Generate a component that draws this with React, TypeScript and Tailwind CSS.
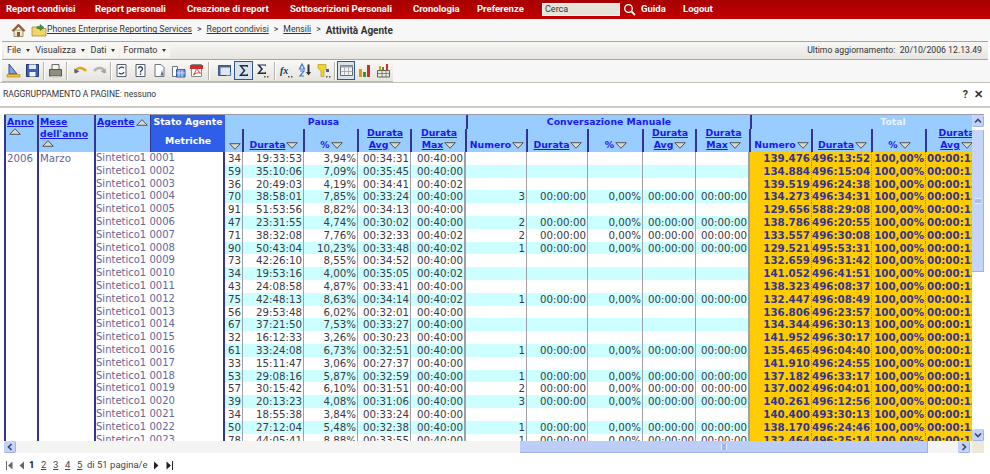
import React from "react";

type Row = [string, string, string, string, string, string, string, string];
const rows: Row[] = [
  ["34", "19:33:53", "3,94%", "00:34:31", "00:40:00", "", "139.476", "496:13:52"],
  ["59", "35:10:06", "7,09%", "00:35:45", "00:40:00", "", "134.884", "496:15:04"],
  ["36", "20:49:03", "4,19%", "00:34:41", "00:40:02", "", "139.519", "496:24:38"],
  ["70", "38:58:01", "7,85%", "00:33:24", "00:40:00", "3", "134.273", "496:34:31"],
  ["91", "51:53:56", "8,82%", "00:34:13", "00:40:00", "", "129.656", "588:29:08"],
  ["47", "23:31:55", "4,74%", "00:30:02", "00:40:00", "2", "138.786", "496:20:55"],
  ["71", "38:32:08", "7,76%", "00:32:33", "00:40:02", "2", "133.557", "496:30:08"],
  ["90", "50:43:04", "10,23%", "00:33:48", "00:40:02", "1", "129.521", "495:53:31"],
  ["73", "42:26:10", "8,55%", "00:34:52", "00:40:00", "", "132.659", "496:31:42"],
  ["34", "19:53:16", "4,00%", "00:35:05", "00:40:02", "", "141.052", "496:41:51"],
  ["43", "24:08:58", "4,87%", "00:33:41", "00:40:00", "", "138.323", "496:08:37"],
  ["75", "42:48:13", "8,63%", "00:34:14", "00:40:02", "1", "132.447", "496:08:49"],
  ["56", "29:53:48", "6,02%", "00:32:01", "00:40:00", "", "136.806", "496:23:57"],
  ["67", "37:21:50", "7,53%", "00:33:27", "00:40:00", "", "134.344", "496:30:13"],
  ["32", "16:12:33", "3,26%", "00:30:23", "00:40:00", "", "141.952", "496:30:17"],
  ["61", "33:24:08", "6,73%", "00:32:51", "00:40:00", "1", "135.465", "496:04:40"],
  ["33", "15:11:47", "3,06%", "00:27:37", "00:40:00", "", "141.910", "496:24:55"],
  ["53", "29:08:16", "5,87%", "00:32:59", "00:40:00", "1", "137.182", "496:33:17"],
  ["57", "30:15:42", "6,10%", "00:31:51", "00:40:00", "2", "137.002", "496:04:01"],
  ["39", "20:13:23", "4,08%", "00:31:06", "00:40:00", "3", "140.261", "496:12:56"],
  ["34", "18:55:38", "3,84%", "00:33:24", "00:40:00", "", "140.400", "493:30:13"],
  ["50", "27:12:04", "5,48%", "00:32:38", "00:40:00", "1", "138.170", "496:24:46"],
  ["78", "44:05:41", "8,88%", "00:33:55", "00:40:00", "1", "132.464", "496:25:14"],
];

const gridCols =
  "grid grid-cols-[33px_57px_56px_75px_18px_61px_54px_53px_55px_61px_61px_55px_53px_54px_62px_60px_54px_60px_48px]";
const rowCols =
  "grid grid-cols-[18px_61px_54px_53px_55px_61px_61px_55px_53px_54px_62px_60px_54px_60px_48px]";

function Tri({ up }: { up?: boolean }) {
  return (
    <svg width="12" height="7" viewBox="0 0 12 7" className="shrink-0">
      <polygon
        points={up ? "6,0.7 11.3,6.3 0.7,6.3" : "0.7,0.7 11.3,0.7 6,6.3"}
        fill="#d8d8d0"
        stroke="#55554f"
        strokeWidth="1"
      />
    </svg>
  );
}

function Head({ l1, l2, plain }: { l1?: string; l2: string; plain?: boolean }) {
  return (
    <div className="h-[23px] bg-[#99ccff] border-l-2 border-[#333399] flex flex-col items-center justify-end overflow-hidden text-[9.3px] leading-[12px] font-bold text-[#1a1aee] -ml-px">
      {l1 && <span className="underline">{l1}</span>}
      <span className="flex items-center gap-[1px] mb-[1px]">
        <span className={plain ? "" : "underline"}>{l2}</span>
        <Tri />
      </span>
    </div>
  );
}

function BarArrow() {
  return <span className="ml-[5px] w-0 h-0 border-l-[2.5px] border-r-[2.5px] border-t-[3px] border-l-transparent border-r-transparent border-t-[#333]" />;
}

function MenuBtn({ t, cls }: { t: string; cls: string }) {
  return (
    <div className={`h-[15px] flex items-center justify-center bg-[#f6f5f1] ${cls}`}>
      {t}
      <BarArrow />
    </div>
  );
}

function Sep({ cls = "mx-[1px]" }: { cls?: string }) {
  return <div className={`w-[1px] h-[18px] bg-[#b5b3aa] border-r border-white box-content ${cls}`} />;
}

function Ico({ children, active }: { children: React.ReactNode; active?: boolean }) {
  return (
    <div className={`w-[19px] h-[19px] flex items-center justify-center ${active ? "border border-[#33558a] bg-[#d9e3ee]" : ""}`}>
      <svg width="15" height="15" viewBox="0 0 15 15">{children}</svg>
    </div>
  );
}

function Toolbar() {
  return (
    <div className="flex items-center pl-[2px] w-[391px] h-[22px] ml-[2px] bg-linear-to-b from-[#f9f8f6] to-[#e6e4df] border-b border-[#b9b7ae]">
      <Ico>
        <path d="M3 1l8 10H3z" fill="#7da3d8" stroke="#2c4f92" />
        <path d="M1 11.5h13v2.5H1z" fill="#f2c32e" stroke="#a67c10" strokeWidth=".6" />
      </Ico>
      <Ico>
        <path d="M1.5 1.5h12v12h-12z" fill="#3f5fb0" stroke="#22366f" />
        <path d="M4 1.5h7v4.5H4z" fill="#dfe8f6" />
        <path d="M4.5 9h6v4.5h-6z" fill="#eef2fa" />
      </Ico>
      <Sep cls="ml-[2px] mr-[1px]" />
      <Ico>
        <path d="M4 1.5h7v5H4z" fill="#f4f4f0" stroke="#6b6b60" />
        <path d="M1.5 6.5h12v6.5h-12z" fill="#8e8f80" stroke="#55564a" />
        <path d="M3 13h9v1.5H3z" fill="#c8c8b8" />
      </Ico>
      <Sep cls="ml-[1px] mr-[3px]" />
      <Ico>
        <path d="M2 10C3 4.5 9 3 13 8" fill="none" stroke="#e2a51c" strokeWidth="2.6" />
        <path d="M1 5.5l1 5 4.5-2z" fill="#49649e" />
      </Ico>
      <Ico>
        <path d="M13 10C12 4.5 6 3 2 8" fill="none" stroke="#b6b6b0" strokeWidth="2.6" />
        <path d="M14 5.5l-1 5-4.5-2z" fill="#a5a5a0" />
      </Ico>
      <Sep cls="ml-[1px] mr-[1px]" />
      <Ico>
        <path d="M3 1.5h9v12H3z" fill="#fff" stroke="#55606e" />
        <path d="M5 6a3 3 0 0 1 5-1M10 9a3 3 0 0 1-5 1" fill="none" stroke="#2b3d72" strokeWidth="1.2" />
      </Ico>
      <Ico>
        <path d="M3 1.5h9v12H3z" fill="#fff" stroke="#55606e" />
        <path d="M5.5 5.5a2 2 0 1 1 3 2c-1 .6-1 1-1 2M7.5 10.5v1.5" fill="none" stroke="#2b3d72" strokeWidth="1.4" />
      </Ico>
      <Ico>
        <path d="M3 1.5h6l3 3v9H3z" fill="#fff" stroke="#6c7480" />
        <path d="M10 7l-1.5 5.5h3z" fill="#54698f" />
      </Ico>
      <Ico>
        <path d="M1.5 3.5h5v10h-5z" fill="#fff" stroke="#6c7480" />
        <path d="M5.5 6.5h8.5v7.5H5.5z" fill="#6e9adf" stroke="#36589a" />
        <path d="M8 6.5V14M11 6.5V14M5.5 10h8.5" stroke="#e8f0fb" strokeWidth=".7" />
      </Ico>
      <Ico>
        <path d="M2.5 1.5h10v12h-10z" fill="#fff" stroke="#888" />
        <path d="M1 2h13v4H1z" fill="#d22b2b" />
        <path d="M4.5 12c2-3 3-6 3-8 1 3 2 5 4 6-3-.5-5 0-7 2z" fill="none" stroke="#c93030" strokeWidth=".9" />
      </Ico>
      <Sep cls="ml-[2px] mr-[5px]" />
      <Ico>
        <path d="M1.5 2.5h12v10h-12z" fill="#dfe6ef" stroke="#2e4a7c" />
        <path d="M1.5 2.5h12v2h-12zM1.5 2.5h2v10h-2z" fill="#4a6796" />
        <path d="M9 12.5h4.5V9" fill="none" stroke="#3d8bd6" strokeWidth="1.2" />
      </Ico>
      <Ico active>
        <path d="M3 2h9v2.5L11 3.5H6l3.5 4-3.5 4h5l1-1V13H3l4.5-5.5z" fill="#1c2c4e" />
      </Ico>
      <Ico>
        <path d="M2 1.5h9v2L10 2.5H5l3 3.5-3 3.5h5l1-1v2.5H2l4-5z" fill="#1c2c4e" />
        <path d="M9 13h1.5v1.5H9zM12 13h1.5v1.5H12z" fill="#555" />
      </Ico>
      <Sep cls="ml-[2px] mr-[1px]" />
      <Ico>
        <text x="2" y="11" fontFamily="Liberation Serif" fontStyle="italic" fontWeight="700" fontSize="10" fill="#22304f">fx</text>
        <path d="M10 13h1.5v1.5H10zM13 13h1.5v1.5H13z" fill="#555" />
      </Ico>
      <Ico>
        <path d="M5 1L2.5 6h5zM3 8h4l-4 5h4" fill="none" stroke="#3c78c8" strokeWidth="1.2" />
        <path d="M11.5 1.5v9" stroke="#333" strokeWidth="2" />
        <path d="M9 9h5l-2.5 3.5z" fill="#333" />
      </Ico>
      <Ico>
        <path d="M2 1.5h8v4l-2 2v6H5v-6l-3-2z" fill="#f4d620" stroke="#a98f10" strokeWidth=".6" />
        <path d="M10 6h3v3h-3z" fill="#44608e" />
        <path d="M10 13h1.5v1.5H10zM13 13h1.5v1.5H13z" fill="#555" />
      </Ico>
      <Sep cls="ml-[1px] mr-[1px]" />
      <Ico active>
        <path d="M1.5 2.5h12v10h-12z" fill="#f2f2ec" stroke="#646a72" />
        <path d="M1.5 2.5h12v2h-12z" fill="#9aa0a8" />
        <path d="M5.5 4.5v8M9.5 4.5v8M1.5 8.5h12" stroke="#9aa0a8" strokeWidth=".8" />
      </Ico>
      <Ico>
        <path d="M2 6h3v8H2z" fill="#d99a12" />
        <path d="M6 9h3v5H6z" fill="#2f9a38" />
        <path d="M10 2h3v12h-3z" fill="#cf2d2d" />
      </Ico>
      <Ico>
        <path d="M3 3h2v4H3z" fill="#d99a12" />
        <path d="M6 4h2v3H6z" fill="#2f9a38" />
        <path d="M10 1h2v6h-2z" fill="#cf2d2d" />
        <path d="M1.5 7.5h12v6.5h-12z" fill="#e9e9df" stroke="#63635a" />
        <path d="M1.5 10.5h12M6 7.5V14M10 7.5V14" stroke="#63635a" strokeWidth=".7" />
      </Ico>
    </div>
  );
}

function ScrollBtn({ children }: { children: React.ReactNode }) {
  return (
    <div className="w-[12px] h-[12px] shrink-0 flex items-center justify-center bg-[#c3d3fb] rounded-[2px] border-r border-b border-[#9db3e8]">
      {children}
    </div>
  );
}

function Chev({ d }: { d: string }) {
  return (
    <svg width="8" height="8" viewBox="0 0 8 8">
      <path d={d} fill="none" stroke="#3d4a66" strokeWidth="1.7" />
    </svg>
  );
}

function Cell({ v, cls }: { v: string; cls: string }) {
  return <div className={`text-right pr-[1px] overflow-hidden whitespace-nowrap ${cls}`}>{v}</div>;
}

export default function App() {
  const sans = "font-['DejaVu_Sans',sans-serif]";
  const ui = "font-['Roboto',sans-serif]";
  return (
    <div className={`w-[990px] h-[474px] overflow-hidden bg-white flex flex-col ${sans}`}>
      {/* top nav */}
      <div className={`h-[19px] shrink-0 bg-linear-to-b from-[#a80000] to-[#c20000] flex items-center pl-[6px] text-white text-[9.5px] font-bold whitespace-nowrap ${ui}`}>
        <span className="w-[89px]">Report condivisi</span>
        <span className="w-[92px]">Report personali</span>
        <span className="w-[103px]">Creazione di report</span>
        <span className="w-[123px]">Sottoscrizioni Personali</span>
        <span className="w-[64px]">Cronologia</span>
        <span className="w-[65px]">Preferenze</span>
        <div className="w-[78px] h-[13px] bg-[#e6e4d8] border border-[#f4f3ec] text-[#333] text-[9px] font-normal leading-[11px] pl-[2px]">Cerca</div>
        <svg width="13" height="13" viewBox="0 0 13 13" className="ml-[3px] mr-[5px]">
          <circle cx="5.5" cy="5.5" r="3.8" fill="none" stroke="#fff" strokeWidth="1.3" />
          <path d="M8.5 8.5l3.5 3.5" stroke="#fff" strokeWidth="1.8" />
        </svg>
        <span className="w-[42px]">Guida</span>
        <span>Logout</span>
      </div>

      {/* breadcrumb */}
      <div className={`h-[22px] shrink-0 bg-[#f7f7f7] flex items-center text-[8.7px] text-[#333] ${ui}`}>
        <svg width="15" height="14" viewBox="0 0 15 14" className="ml-[11px]">
          <path d="M3 7v6.5h9V7z" fill="#eee8c8" stroke="#6d6a50" strokeWidth=".7" />
          <path d="M7.5 1L1 7.5l1.2.8L7.5 3.5l5.3 4.8 1.2-.8z" fill="#a85a26" stroke="#6e3b15" strokeWidth=".6" />
          <path d="M6 9h3v4.5H6z" fill="#8a5a30" />
        </svg>
        <svg width="16" height="14" viewBox="0 0 16 14" className="ml-[5px]">
          <path d="M1 4h5l1 1.5h8V13H1z" fill="#f2d468" stroke="#9c8424" strokeWidth=".7" />
          <path d="M9 1.5l4 3-4 3V5.5H6v-2h3z" fill="#3f9a3a" stroke="#236a20" strokeWidth=".5" />
        </svg>
        <span className="underline">Phones Enterprise Reporting Services</span>
        <span className="mx-[5px]">&gt;</span>
        <span className="underline">Report condivisi</span>
        <span className="mx-[5px]">&gt;</span>
        <span className="underline">Mensili</span>
        <span className="mx-[5px]">&gt;</span>
        <span className="font-bold text-[10px]">Attività Agente</span>
      </div>

      {/* menu toolbar */}
      <div className={`h-[19px] shrink-0 mx-[2px] border-y border-[#a9a89c] bg-linear-to-b from-[#f8f7f5] to-[#e7e5e0] flex items-center text-[9px] text-[#333] ${ui}`}>
        <div className="flex items-center gap-[1px] ml-[2px]">
          <MenuBtn t="File" cls="w-[29px]" />
          <MenuBtn t="Visualizza" cls="w-[52px]" />
          <MenuBtn t="Dati" cls="w-[32px]" />
          <MenuBtn t="Formato" cls="w-[50px]" />
        </div>
        <div className="ml-auto pr-[6px] text-[8.7px]">Ultimo aggiornamento:&nbsp; 20/10/2006 12.13.49</div>
      </div>

      {/* icon toolbar */}
      <div className="h-[23px] shrink-0 bg-[#f7f7f7] flex items-center border-b border-[#c4c1b8]">
        <Toolbar />
      </div>

      {/* grouping */}
      <div className={`h-[25px] shrink-0 flex items-center pl-[3px] pr-[7px] text-[8.5px] text-[#333] border-b-2 border-[#cfcbc3] ${ui}`}>
        <span>RAGGRUPPAMENTO A PAGINE: nessuno</span>
        <span className="ml-auto font-bold text-[10.5px]">?</span>
        <span className="ml-[6px] font-bold text-[10.5px]">✕</span>
      </div>

      {/* report */}
      <div className="mt-[6px] ml-[4px] w-[980px] flex shrink-0 border-t border-[#9a9aa8]">
        <div className="w-[968px] h-[338px] overflow-hidden shrink-0">
          <div className="w-[1015px]">
            {/* header */}
            <div className={`${gridCols} grid-rows-[14px_23px] h-[37px] bg-[#99ccff] text-[9.3px] font-bold`}>
              <div className="row-span-2 border-l-2 border-[#333399] leading-[12px] text-[#1a1aee] pl-[1px] pt-[1px]">
                <span className="underline">Anno</span>
                <div className="pl-[2px]"><Tri up /></div>
              </div>
              <div className="row-span-2 border-l-2 border-[#333399] leading-[12px] text-[#1a1aee] pl-[1px] pt-[1px]">
                <span className="underline">Mese dell'anno</span>
                <div className="pl-[2px]"><Tri up /></div>
              </div>
              <div className="row-span-2 border-l-2 border-[#333399] leading-[12px] text-[#1a1aee] pl-[1px] pt-[1px] flex items-start gap-[1px]">
                <span className="underline">Agente</span>
                <span className="pt-[3px]"><Tri up /></span>
              </div>
              <div className="border-l border-[#333399] bg-[#2f5fe8] text-white leading-[13px] text-center whitespace-nowrap">Stato Agente</div>
              <div className="col-span-5 text-center text-[#1a1aee] leading-[14px] pr-[44px]">Pausa</div>
              <div className="col-span-5 border-l-2 border-[#333399] text-center text-[#1a1aee] leading-[14px]">Conversazione Manuale</div>
              <div className="col-span-5 border-l-2 border-[#333399] text-center text-[#e8f4ff] leading-[14px]">Total</div>

              <div className="border-l border-[#333399] bg-[#2f5fe8] text-white flex items-center justify-center h-[23px]">Metriche</div>
              <div className="h-[23px] flex items-end justify-end pb-[2px] pr-[2px]">
                <Tri />
              </div>
              <Head l2="Durata" />
              <Head l2="%" plain />
              <Head l1="Durata" l2="Avg" />
              <Head l1="Durata" l2="Max" />
              <Head l2="Numero" plain />
              <Head l2="Durata" />
              <Head l2="%" plain />
              <Head l1="Durata" l2="Avg" />
              <Head l1="Durata" l2="Max" />
              <Head l2="Numero" plain />
              <Head l2="Durata" />
              <Head l2="%" plain />
              <Head l1="Durata" l2="Avg" />
              <div />
            </div>

            {/* body */}
            <div className="flex h-[289px] overflow-hidden text-[10.25px] leading-[12.8px]">
              <div className="w-[33px] shrink-0 border-l-2 border-[#333399] text-[#666699] pl-[1px]">2006</div>
              <div className="w-[57px] shrink-0 border-l-2 border-[#333399] text-[#666699] pl-[1px]">Marzo</div>
              <div className="w-[131px] shrink-0 border-x-2 border-[#333399] text-[#666699] text-[10px]">
                {rows.map((_, i) => (
                  <div key={i} className="h-[12.8px] whitespace-nowrap">
                    Sintetico1 {String(i + 1).padStart(4, "0")}
                  </div>
                ))}
              </div>
              <div className="flex-1">
                {rows.map((r, i) => {
                  const bg = i % 2 ? "bg-[#ccffff]" : "bg-white";
                  const c = "border-r border-[#a0a0a8] text-[#3a3a44]";
                  const t = "border-r border-dotted border-[#8f8f80] font-bold text-[#333399]";
                  const hasConv = r[5] !== "";
                  return (
                    <div key={i} className={`${rowCols} h-[12.8px] ${bg}`}>
                      <Cell v={r[0]} cls={c} />
                      <Cell v={r[1]} cls={c} />
                      <Cell v={r[2]} cls={c} />
                      <Cell v={r[3]} cls={c} />
                      <Cell v={r[4]} cls="border-r-2 border-[#a0a0a8] text-[#3a3a44]" />
                      <Cell v={r[5]} cls={c} />
                      <Cell v={hasConv ? "00:00:00" : ""} cls={c} />
                      <Cell v={hasConv ? "0,00%" : ""} cls={c} />
                      <Cell v={hasConv ? "00:00:00" : ""} cls={c} />
                      <Cell v={hasConv ? "00:00:00" : ""} cls="border-r-2 border-[#a0a0a8] text-[#3a3a44]" />
                      <Cell v={r[6]} cls={`bg-[#ffcc00] ${t}`} />
                      <Cell v={r[7]} cls={`bg-[#ffcc00] ${t}`} />
                      <Cell v="100,00%" cls={`bg-[#ffcc00] ${t}`} />
                      <div className="bg-[#ffcc00] font-bold text-[#333399] whitespace-nowrap overflow-hidden col-span-2 pl-[1px]">00:00:13</div>
                    </div>
                  );
                })}
              </div>
            </div>

            {/* horizontal scrollbar */}
            <div className="w-[968px] h-[12px] flex bg-[#f4f4f2]">
              <ScrollBtn><Chev d="M5.5 1L2.5 4l3 3" /></ScrollBtn>
              <div className="ml-[504px] w-[408px] h-[12px] bg-[#bccdf8] border-b border-r border-[#9db3e8] flex items-center justify-center">
                <div className="w-[6px] h-[6px] border-x border-[#e6edfd] bg-[#9fb5ec]" />
              </div>
              <div className="w-[30px]" />
              <ScrollBtn><Chev d="M2.5 1l3 3-3 3" /></ScrollBtn>
            </div>
          </div>
        </div>

        {/* vertical scrollbar */}
        <div className="w-[12px] h-[338px] flex flex-col bg-white">
          <div className="h-[14px]"><ScrollBtn><Chev d="M1 5.5L4 2.5l3 3" /></ScrollBtn></div>
          <div className="mt-[1px] w-[12px] h-[142px] bg-[#c5d4f9] border-r border-b border-[#9db3e8] flex items-center justify-center">
            <div className="w-[6px] h-[6px] border-y border-[#e6edfd] bg-[#a9bdef]" />
          </div>
          <div className="flex-1" />
          <div className="h-[14px] flex items-end"><ScrollBtn><Chev d="M1 2.5l3 3 3-3" /></ScrollBtn></div>
          <div className="h-[12px] bg-[#ece9d8]" />
        </div>
      </div>

      {/* pager */}
      <div className={`mt-[6px] h-[13px] flex items-center pl-[6px] text-[9.5px] text-[#444] ${ui}`}>
        <svg width="7" height="9" viewBox="0 0 7 9"><path d="M0.5 0v9" stroke="#666" /><path d="M6.5 0.5v8L2 4.5z" fill="#666" /></svg>
        <svg width="7" height="9" viewBox="0 0 7 9" className="ml-[5px]"><path d="M6 0.5v8L1.5 4.5z" fill="#666" /></svg>
        <span className="ml-[4px] w-[12px] font-bold text-[#111]">1</span>
        <span className="w-[12px] underline">2</span>
        <span className="w-[12px] underline">3</span>
        <span className="w-[12px] underline">4</span>
        <span className="w-[10px] underline">5</span>
        <span>di 51 pagina/e</span>
        <svg width="7" height="9" viewBox="0 0 7 9" className="ml-[5px]"><path d="M1 0.5v8L5.5 4.5z" fill="#222" /></svg>
        <svg width="7" height="9" viewBox="0 0 7 9" className="ml-[6px]"><path d="M0.5 0.5v8L5 4.5z" fill="#222" /><path d="M6.5 0v9" stroke="#222" /></svg>
      </div>
    </div>
  );
}
